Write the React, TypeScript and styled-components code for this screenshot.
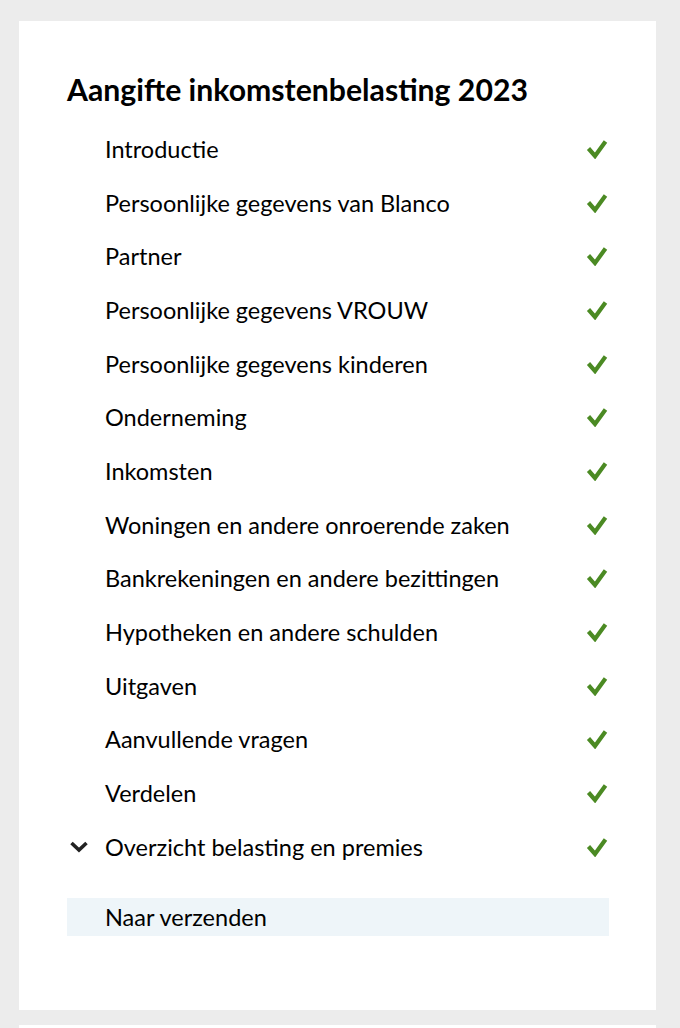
import React from "react";
import styled, { createGlobalStyle } from "styled-components";

const GlobalStyle = createGlobalStyle`
  body {
    margin: 0;
    background: #ececec;
    font-family: Lato, "Liberation Sans", sans-serif;
    color: #000;
  }
`;

const steps = [
  "Introductie",
  "Persoonlijke gegevens van Blanco",
  "Partner",
  "Persoonlijke gegevens VROUW",
  "Persoonlijke gegevens kinderen",
  "Onderneming",
  "Inkomsten",
  "Woningen en andere onroerende zaken",
  "Bankrekeningen en andere bezittingen",
  "Hypotheken en andere schulden",
  "Uitgaven",
  "Aanvullende vragen",
  "Verdelen",
  "Overzicht belasting en premies",
];

const Check = () => (
  <svg width="22" height="20" viewBox="0 0 22 20">
    <path d="M2.5 9.5 L9 17 L19.5 2.5" fill="none" stroke="#4b8a23" strokeWidth="4.2" />
  </svg>
);

const Chevron = () => (
  <svg width="20" height="12" viewBox="0 0 20 12">
    <path d="M2.5 2 L10 9 L17.5 2" fill="none" stroke="#222" strokeWidth="3.6" />
  </svg>
);

export default function App() {
  return (
    <>
      <GlobalStyle />
      <Page>
        <Card>
          <Title>Aangifte inkomstenbelasting 2023</Title>
          <StepList>
            {steps.map((step, i) => (
              <StepRow key={step}>
                <Marker>{i === steps.length - 1 && <Chevron />}</Marker>
                <StepName>{step}</StepName>
                <Check />
              </StepRow>
            ))}
          </StepList>
          <SendRow>
            <Marker />
            <StepName>Naar verzenden</StepName>
          </SendRow>
        </Card>
        <NextCard />
      </Page>
    </>
  );
}

const Page = styled.div`
  padding: 21px 24px 0 19px;
  display: flex;
  flex-direction: column;
  gap: 15px;
`;

const Card = styled.div`
  width: 637px;
  height: 989px;
  box-sizing: border-box;
  background: #fff;
  padding: 48px 48px 0 48px;
`;

const NextCard = styled.div`
  width: 637px;
  height: 40px;
  background: #fff;
`;

const Title = styled.h1`
  margin: 0 0 13px 0;
  font-size: 30.2px;
  font-weight: 700;
  line-height: 40px;
`;

const StepList = styled.ul`
  list-style: none;
  margin: 0;
  padding: 0;
`;

const StepRow = styled.li`
  display: grid;
  grid-template-columns: 38px 1fr auto;
  align-items: center;
  height: 53.7px;
`;

const Marker = styled.span`
  display: flex;
  align-items: center;
  padding-left: 2px;
`;

const StepName = styled.span`
  font-size: 23.5px;
  line-height: 30px;
`;

const SendRow = styled.div`
  display: grid;
  grid-template-columns: 38px 1fr;
  align-items: center;
  height: 38px;
  margin-top: 24px;
  margin-right: -1px;
  background: #eef5f9;
`;
